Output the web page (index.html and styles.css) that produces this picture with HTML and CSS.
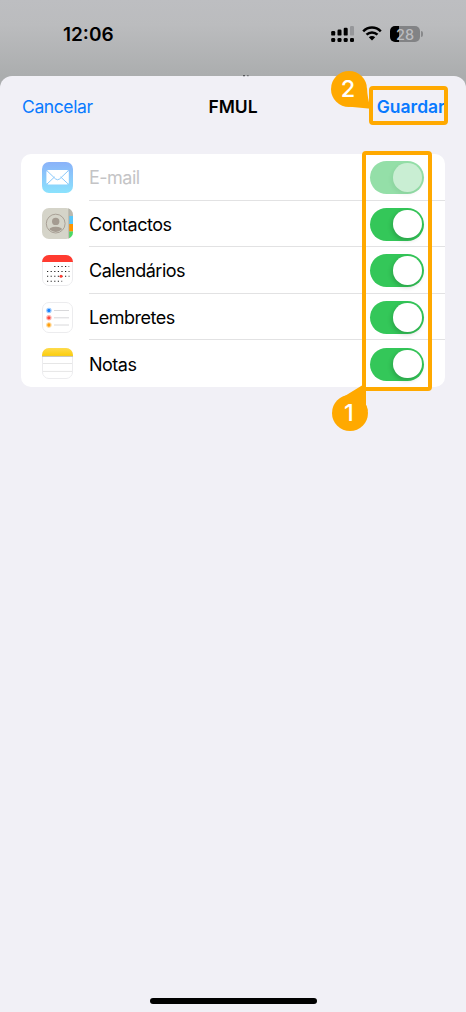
FILE: index.html
```html
<!DOCTYPE html>
<html lang="pt">
<head>
<meta charset="utf-8">
<title>FMUL</title>
<link rel="stylesheet" href="styles.css">
</head>
<body>
<div class="phone">
  <header class="status">
    <span class="time">12:06</span>
    <div class="indicators">
      <svg class="signal" width="24" height="17" viewBox="0 0 24 17">
        <g><rect x=".2" y="5" width="4" height="4.6" rx="1.2"/><rect x="6.5" y="3.5" width="4" height="6.1" rx="1.2"/><rect x="12.7" y="1.8" width="4" height="7.8" rx="1.2"/></g>
        <rect x="19" y="0" width="4" height="9.6" rx="1.2" fill="#96979a"/>
        <g><rect x=".2" y="12" width="4" height="4" rx="1.3"/><rect x="6.5" y="12" width="4" height="4" rx="1.3"/><rect x="12.7" y="12" width="4" height="4" rx="1.3"/><rect x="19" y="12" width="4" height="4" rx="1.3"/></g>
      </svg>
      <svg class="wifi" width="20" height="15" viewBox="0 0 20 15">
        <path d="M1.2 5.3C6.2.3 13.8.3 18.8 5.3M4.5 8.7C7.7 5.6 12.3 5.6 15.5 8.7" fill="none" stroke="#000" stroke-width="2.5"/>
        <path d="M6.8 11.2c1.8-1.7 4.6-1.7 6.4 0L10 14.5z"/>
      </svg>
      <div class="battery"><span>28</span></div><i class="battery-cap"></i>
    </div>
  </header>
  <main class="sheet">
    <nav class="navbar">
      <a class="cancel">Cancelar</a>
      <h1>FMUL</h1>
      <a class="save">Guardar</a>
    </nav>
    <section class="card">
      <div class="row muted">
        <svg class="icon" viewBox="0 0 31 31">
          <defs><linearGradient id="mail" x2="0" y2="1"><stop stop-color="#8ab2f9"/><stop offset="1" stop-color="#8be2fd"/></linearGradient></defs>
          <rect width="31" height="31" rx="7" fill="url(#mail)"/>
          <rect x="4.4" y="8" width="22.4" height="14.6" rx="2" fill="#fff"/>
          <path d="M5 8.8l8.5 8.1q2.1 1.8 4.2 0l8.5-8.1M5 22l7.6-7.1M26.2 22l-7.6-7.1" fill="none" stroke="#8bc9fb" stroke-width="1"/>
        </svg>
        <div class="cell"><span class="label">E-mail</span><i class="toggle"></i></div>
      </div>
      <div class="row">
        <svg class="icon" viewBox="0 0 31 31">
          <defs><clipPath id="tile"><rect width="31" height="31" rx="7"/></clipPath><clipPath id="face"><circle cx="13.7" cy="15.6" r="8.4"/></clipPath></defs>
          <g clip-path="url(#tile)">
            <path fill="#d5d4c9" d="M0 0h31v31H0z"/><path fill="#bab8ae" d="M27 0h4v8h-4z"/><path fill="#5ac8fa" d="M27 8h4v8h-4z"/><path fill="#ff9500" d="M27 16h4v7.5h-4z"/><path fill="#4cd964" d="M27 23.5h4V31h-4z"/>
            <path fill="#aaa89f" d="M26.5 0h.8v31h-.8z"/>
          </g>
          <circle cx="13.7" cy="15.6" r="9.4" fill="none" stroke="#a49b91" stroke-width=".9"/>
          <g clip-path="url(#face)" fill="#a49b91"><circle cx="13.7" cy="13.4" r="3.7"/><ellipse cx="13.7" cy="23.4" rx="7.5" ry="4.7"/></g>
        </svg>
        <div class="cell"><span class="label">Contactos</span><i class="toggle"></i></div>
      </div>
      <div class="row">
        <svg class="icon" viewBox="0 0 31 31">
          <rect x=".5" y=".5" width="30" height="30" rx="6.5" fill="#fff" stroke="#ececee"/>
          <path fill="#ff3b30" d="M0 7a7 7 0 0 1 7-7h17a7 7 0 0 1 7 7v.1H0z"/>
          <g stroke="#222" stroke-width="1.1" stroke-dasharray="1.2 2.4" fill="none"><path d="M12.2 11.5h15M5 16.5h22.5M5 21.3h22.5M5 26.2h15.2"/></g>
          <circle cx="19" cy="21.3" r="1.5" fill="#ff3b30"/>
        </svg>
        <div class="cell"><span class="label">Calendários</span><i class="toggle"></i></div>
      </div>
      <div class="row">
        <svg class="icon" viewBox="0 0 31 31">
          <rect x=".5" y=".5" width="30" height="30" rx="6.5" fill="#fff" stroke="#ececee"/>
          <g stroke-width="1.1"><circle cx="6.9" cy="8.5" r="2.2" fill="#1984ff" stroke="#a5cfff"/><circle cx="6.9" cy="15.8" r="2.2" fill="#ff453a" stroke="#ffb9b5"/><circle cx="6.9" cy="23" r="2.2" fill="#ff9f0a" stroke="#ffd99d"/></g>
          <path d="M12 8.5h15M12 15.8h15M12 23h15" stroke="#d8d8da"/>
        </svg>
        <div class="cell"><span class="label">Lembretes</span><i class="toggle"></i></div>
      </div>
      <div class="row">
        <svg class="icon" viewBox="0 0 31 31">
          <defs><linearGradient id="note" x2="0" y2="1"><stop stop-color="#fedb4d"/><stop offset="1" stop-color="#fccd0a"/></linearGradient></defs>
          <rect x=".5" y=".5" width="30" height="30" rx="6.5" fill="#fff" stroke="#ececee"/>
          <path fill="url(#note)" d="M0 7a7 7 0 0 1 7-7h17a7 7 0 0 1 7 7v1H0z"/>
          <path d="M0 8.4h31" stroke="#c4c1b5"/><path d="M1 15.5h29M1 23.4h29" stroke="#e6e6e6"/>
        </svg>
        <div class="cell"><span class="label">Notas</span><i class="toggle"></i></div>
      </div>
    </section>
    <footer class="home-indicator"></footer>
  </main>
  <svg class="behind" width="8" height="2" viewBox="0 0 8 2"><path d="M1 0h2v1.3H1zM5.3 0h1.2v1.3H5.3z" fill="#55565a"/></svg>
  <div class="mark mark-toggles"></div>
  <div class="mark mark-save"></div>
  <svg class="pin pin-two" width="40" height="38" viewBox="0 0 40 38"><circle cx="18" cy="18" r="18"/><path d="M36 17q.3 9 3.6 20.7L19 35.8z"/></svg>
  <span class="number number-two">2</span>
  <svg class="pin pin-one" width="37" height="48" viewBox="0 0 37 48"><circle cx="18" cy="30" r="18"/><path d="M12 13.5L34 0v22l1.8 6z"/></svg>
  <span class="number number-one">1</span>
</div>
</body>
</html>
```

FILE: styles.css
```css
* { box-sizing: border-box; }
body { margin: 0; font-family: Inter, "Liberation Sans", sans-serif; color: #000; }
.phone { position: relative; width: 466px; height: 1012px; overflow: hidden; display: flex; flex-direction: column; background: linear-gradient(#bdbec1 0, #bbbcbe 25px, #abadae 76px, #abadae 100px); }
.status { height: 76px; flex: none; display: flex; justify-content: space-between; align-items: flex-start; padding: 22px 43px 0 63px; }
.time { font-size: 19px; line-height: 26px; font-weight: 600; }
.indicators { display: flex; align-items: flex-start; padding-top: 4px; }
.wifi { margin: 0 8px 0 7px; }
.battery { width: 30px; height: 16px; border-radius: 5px; background: linear-gradient(90deg, #000 9px, #828385 9px); color: #bcbdc0; font-size: 14.5px; font-weight: 500; line-height: 17px; text-align: center; }
.battery-cap { width: 2px; height: 6px; margin: 5px 0 0 1px; border-radius: 0 2px 2px 0; background: #88898b; }
.sheet { flex: 1; display: flex; flex-direction: column; align-items: center; background: #f1f0f6; border-radius: 12px 12px 0 0; }
.navbar { width: 100%; height: 60px; display: grid; grid-template-columns: 1fr auto 1fr; align-items: center; padding: 1px 21px 0; font-size: 17.5px; line-height: 24px; }
.navbar h1 { margin: 0; font-size: 17.5px; line-height: 24px; font-weight: 600; }
.cancel, .save { color: #087aff; }
.cancel { padding-left: 1px; letter-spacing: -.4px; }
.save { justify-self: end; font-weight: 600; letter-spacing: -.02px; }
.card { width: 424px; height: 233px; margin-top: 18px; display: grid; grid-template-rows: repeat(5, 1fr); border-radius: 10px; background: #fff; }
.row { display: flex; align-items: center; padding-left: 21px; }
.icon { width: 31px; height: 31px; flex: none; margin-right: 16px; }
.cell { flex: 1; height: 100%; display: flex; align-items: center; justify-content: space-between; padding: 2px 21px 0 0; border-bottom: 1px solid #e2e2e3; font-size: 18px; letter-spacing: -.5px; }
.row:last-child .cell { border-bottom: 0; padding-top: 1px; }
.toggle { width: 54.5px; height: 33px; padding: 2px 2.5px; border-radius: 17px; background: #34c759; display: flex; justify-content: flex-end; }
.toggle::before { content: ""; width: 28.5px; height: 28.5px; border-radius: 50%; background: #fff; box-shadow: -1px 2px 5px #0003; }
.muted .label { color: #c4c4c6; }
.muted .toggle { background: #94dfa8; }
.muted .toggle::before { background: #c9eed3; box-shadow: -1px 2px 5px #0001; }
.home-indicator { width: 167px; height: 6px; margin: auto 0 8px; border-radius: 3px; background: #000; }
.behind { position: absolute; left: 242px; top: 75px; }
.mark { position: absolute; border: 4px solid #ffa900; border-radius: 4px; }
.mark-toggles { left: 362px; top: 151px; width: 70px; height: 240px; }
.mark-save { left: 369px; top: 86px; width: 79px; height: 39px; }
.pin { position: absolute; fill: #ffa900; }
.pin-two { left: 330.5px; top: 71px; }
.pin-one { left: 331.5px; top: 383px; }
.number { position: absolute; width: 36px; line-height: 36px; text-align: center; color: #fff; font-size: 23.5px; font-weight: 500; }
.number-two { left: 330px; top: 71px; }
.number-one { left: 331px; top: 395px; }
```
